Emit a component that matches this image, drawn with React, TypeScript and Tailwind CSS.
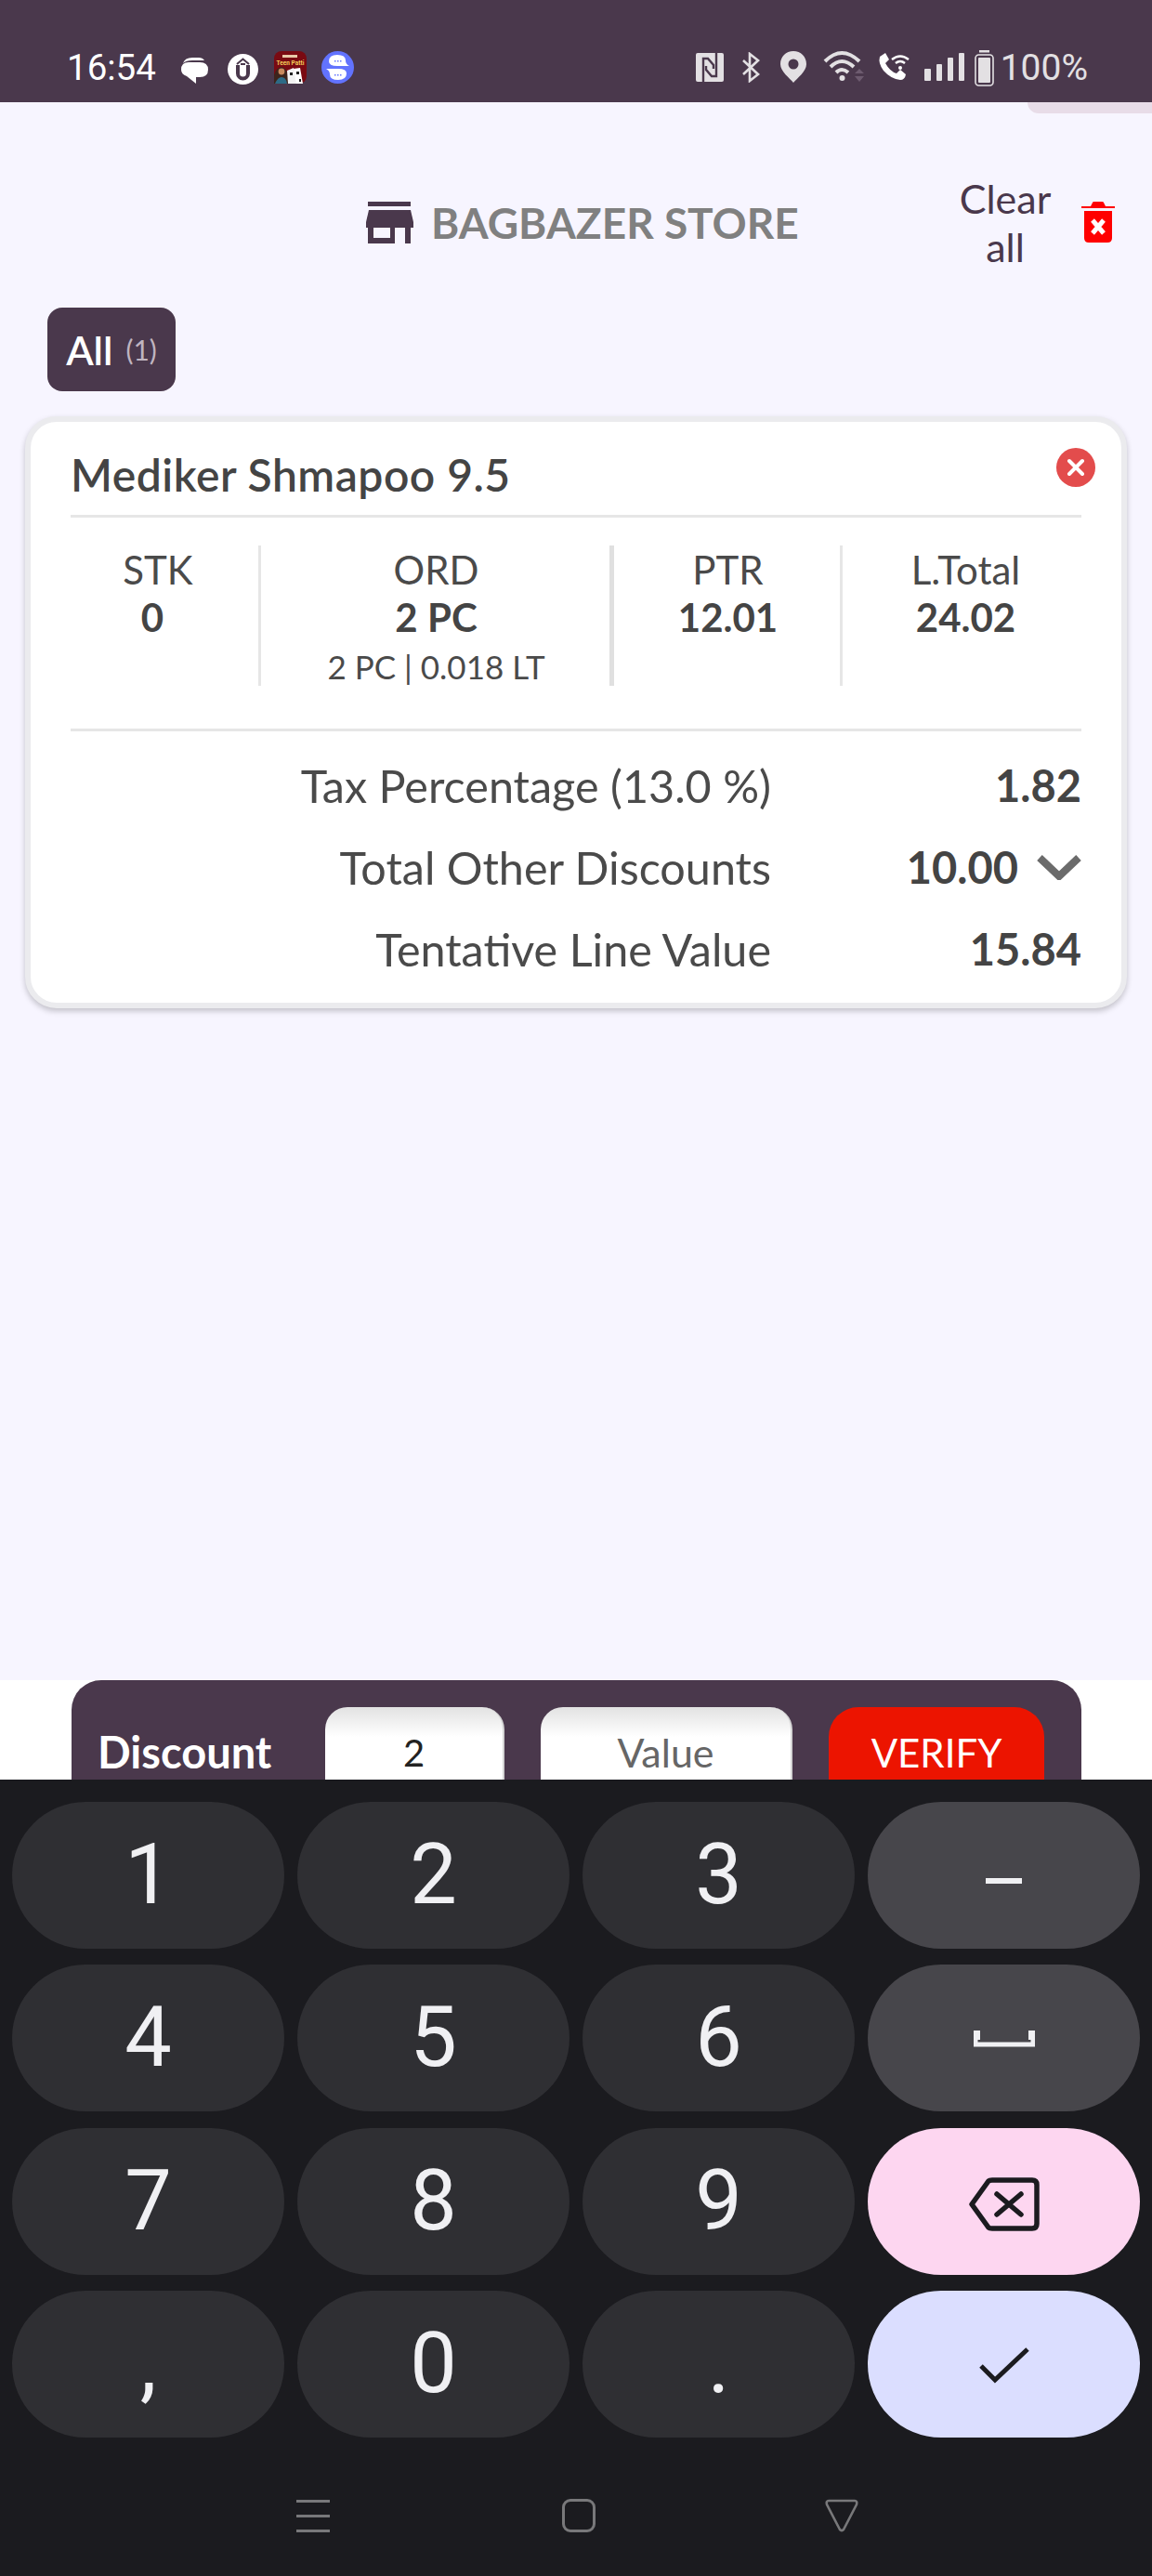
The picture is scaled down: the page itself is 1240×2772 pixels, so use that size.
import { ReactNode } from 'react'

const DIGIT_ROWS = [
  ['1', '2', '3'],
  ['4', '5', '6'],
  ['7', '8', '9'],
  [',', '0', '.'],
]

function MessageIcon() {
  return (
    <svg width="29" height="28" viewBox="0 0 29 28" className="mt-[7px] ml-[27px]">
      <path d="M2 6 Q4 0 12 0 H19 Q23 0 25 3 H12 Q5 3 2 6 Z" fill="#fff" />
      <path d="M0 13 Q0 5 8 5 H20 Q29 5 29 13 Q29 21 20 21 H16 V28 L6 20 Q0 18 0 13 Z" fill="#fff" />
    </svg>
  )
}

function UploadBadge() {
  return (
    <svg width="33" height="33" viewBox="0 0 33 33" className="mt-[3px] ml-[21px]">
      <circle cx="16.5" cy="16.5" r="16.5" fill="#fff" />
      <path d="M10 11 L16.5 5.5 L23 11" fill="none" stroke="#4a384c" strokeWidth="2" />
      <path d="M11 12 V21 A5.5 5.5 0 0 0 22 21 V12" fill="none" stroke="#4a384c" strokeWidth="4" />
      <path d="M14 10 H19 V12 H14 Z" fill="#4a384c" />
    </svg>
  )
}

function TeenPattiIcon() {
  return (
    <svg width="35" height="35" viewBox="0 0 35 35" className="ml-[17px]">
      <rect width="35" height="35" rx="8" fill="#7a0a12" />
      <text x="17.5" y="15" textAnchor="middle" fontSize="6.5" fontWeight="700" fill="#f4cd5a" fontFamily="Roboto, sans-serif">Teen Patti</text>
      <rect x="9" y="4" width="16" height="3" fill="#e8c9a8" />
      <path d="M0 35 V26 Q2 18 8 17 Q13 18 15 26 V35 Z" fill="#3d241c" />
      <circle cx="8" cy="22" r="3.4" fill="#c98a5d" />
      <path d="M1 35 Q4 28 8 28 Q13 28 14 35 Z" fill="#2d6b86" />
      <path d="M14 21 L21 18 L26 35 H15 Z" fill="#f2f2f2" />
      <path d="M21 19 L28 18 L31 35 H24 Z" fill="#ffffff" />
      <path d="M17 23 h3 v3 h-3 Z M24 22 h3 v3 h-3 Z M27 30 h2 v3 h-2 Z" fill="#222" />
    </svg>
  )
}

function ChatBubbleIcon() {
  return (
    <svg width="35" height="35" viewBox="0 0 35 35" className="ml-[16px]">
      <circle cx="17.5" cy="17.5" r="17.5" fill="#6273fe" />
      <path d="M8 11 Q8 4 17 4 Q26 4 26 10 Q26 14 30 16 H17 Q8 16 8 11 Z" fill="#fff" />
      <path d="M27 24 Q27 31 18 31 Q9 31 9 25 Q9 21 5 19 H18 Q27 19 27 24 Z" fill="#fff" />
      <path d="M14 10 h1.5 v1.5 h-1.5 Z M17 10 h1.5 v1.5 h-1.5 Z M20 10 h1.5 v1.5 h-1.5 Z M14 25 h1.5 v1.5 h-1.5 Z M17 25 h1.5 v1.5 h-1.5 Z M20 25 h1.5 v1.5 h-1.5 Z" fill="#6273fe" />
    </svg>
  )
}

function SystemIcons() {
  const c = '#e3e0e3'
  return (
    <div className="flex items-start">
      {/* nfc */}
      <svg width="30" height="31" viewBox="0 0 30 31" className="mt-[2px]">
        <rect width="30" height="31" rx="2" fill={c} />
        <path d="M8 31 V6 H13 L19 13 V17" fill="none" stroke="#4a384c" strokeWidth="2.4" />
        <path d="M22 0 V25 H17 L11 18 V14" fill="none" stroke="#4a384c" strokeWidth="2.4" />
      </svg>
      {/* bluetooth */}
      <svg width="21" height="33" viewBox="0 0 21 33" className="ml-[19px] mt-[1px]">
        <path d="M2 9 L18 24 L9 31 V2 L18 9 L2 24" fill="none" stroke={c} strokeWidth="2.6" />
      </svg>
      {/* location */}
      <svg width="28" height="34" viewBox="0 0 28 34" className="ml-[21px]">
        <path d="M14 0 C6 0 0 6 0 14 C0 22 10 29 14 34 C18 29 28 22 28 14 C28 6 22 0 14 0 Z" fill={c} />
        <circle cx="14" cy="14" r="5.5" fill="#4a384c" />
      </svg>
      {/* wifi with up/down arrows */}
      <svg width="45" height="35" viewBox="0 0 45 35" className="ml-[18px] -mt-[2px]">
        <path d="M2 13 Q20 -5 39 13" fill="none" stroke={c} strokeWidth="4" />
        <path d="M8 19 Q20 7 33 19" fill="none" stroke={c} strokeWidth="4" />
        <path d="M14 25 Q20 19 27 25" fill="none" stroke={c} strokeWidth="4" />
        <circle cx="20.5" cy="31" r="3" fill={c} />
        <path d="M34 26 L39 21 L44 26 Z M34 29 L44 29 L39 35 Z" fill="#6d5b6f" />
      </svg>
      {/* wifi calling */}
      <svg width="35" height="31" viewBox="0 0 35 31" className="ml-[14px] mt-[1px]">
        <path d="M2 5 L8 1 L12 8 L8 12 Q13 21 20 23 L24 19 L30 24 Q29 30 24 30 Q14 29 6 20 Q0 12 2 5 Z" fill="#fff" />
        <path d="M15 8 Q24 1 33 8" fill="none" stroke="#fff" strokeWidth="2.5" />
        <path d="M19 12 Q24 8 29 12" fill="none" stroke="#fff" strokeWidth="2.5" />
        <circle cx="24" cy="17" r="2" fill="#fff" />
      </svg>
      {/* signal */}
      <div className="ml-[15px] mt-[2px] flex h-[30px] items-end gap-[6px]">
        <div className="h-[13px] w-[7px] rounded-[1px] bg-[#e3e0e3]" />
        <div className="h-[18px] w-[6px] rounded-[1px] bg-[#e3e0e3]" />
        <div className="h-[25px] w-[6px] rounded-[1px] bg-[#e3e0e3]" />
        <div className="h-[30px] w-[6px] rounded-[1px] bg-[#e3e0e3]" />
      </div>
      {/* battery */}
      <svg width="21" height="39" viewBox="0 0 21 39" className="ml-[11px] -mt-[1px]">
        <rect x="5" y="0" width="11" height="2.5" fill={c} />
        <rect x="1" y="5" width="19" height="33" rx="3.5" fill="none" stroke={c} strokeWidth="1.6" />
        <rect x="4" y="8" width="13" height="27" rx="1" fill={c} />
      </svg>
    </div>
  )
}

function StatusBar() {
  return (
    <div className="flex h-[110px] shrink-0 items-start justify-between bg-[#4a384c] pl-[72px] pr-[69px] pt-[55px] font-['Roboto',sans-serif]">
      <div className="flex items-start">
        <span className="mt-[-1px] w-[96px] text-[38.5px] leading-[38px] text-white">16:54</span>
        <MessageIcon />
        <UploadBadge />
        <TeenPattiIcon />
        <ChatBubbleIcon />
      </div>
      <div className="flex items-start">
        <SystemIcons />
        <span className="ml-[7px] mt-[-1px] text-[39px] leading-[38px] text-[#e3e0e3]">100%</span>
      </div>
    </div>
  )
}

function StoreIcon() {
  return (
    <svg width="51" height="45" viewBox="0 0 51 45" className="shrink-0">
      <rect x="2" y="0" width="46" height="5" fill="#4a384c" />
      <path d="M3 9 H48 L51 22 V28 H0 V22 Z" fill="#4a384c" />
      <path d="M2 28 H48 V45 H2 Z M8 28 V39 H26 V28 Z M31 28 V45 H42 V28 Z" fill="#4a384c" fillRule="evenodd" />
    </svg>
  )
}

function TrashIcon() {
  return (
    <svg width="36" height="44" viewBox="0 0 36 44" className="shrink-0">
      <path d="M0 7 V5 H10 L12 1 Q12 0 14 0 H22 Q24 0 24 1 L26 5 H36 V7 Z" fill="#ff0000" />
      <path d="M3 10 H33 V39 Q33 44 28 44 H8 Q3 44 3 39 Z" fill="#ff0000" />
      <path d="M12 20 L24 34 M24 20 L12 34" stroke="#fff" strokeWidth="5" />
    </svg>
  )
}

function StatColumn({ label, value, sub, className, valueClass }: { label: string; value: string; sub?: string; className: string; valueClass?: string }) {
  return (
    <div className={`flex flex-col items-center ${className}`}>
      <span className="mt-[6px] text-[42px] leading-[40px] text-[#4a4a4a]">{label}</span>
      <span className={`mt-[11px] text-[42px] font-bold leading-[40px] text-[#444] ${valueClass ?? ''}`}>{value}</span>
      {sub && <span className="mt-[13px] text-[35px] leading-[40px] text-[#4a4a4a]">{sub}</span>}
    </div>
  )
}

function SummaryRow({ label, children, height }: { label: string; children: ReactNode; height: string }) {
  return (
    <div className={`flex items-center ${height}`}>
      <span className="w-[754px] text-right text-[48.5px] leading-none text-[#4a4a4a]">{label}</span>
      <div className="flex flex-1 items-center justify-end text-[47px] font-bold leading-none text-[#444]">{children}</div>
    </div>
  )
}

function ProductCard() {
  return (
    <div className="mx-[27px] mt-[27px] h-[637px] rounded-[34px] border-[6px] border-[#ebebee] bg-white shadow-[0_3px_6px_rgba(0,0,0,0.22)]">
      <div className="relative mx-[43px] flex h-[103px] items-start border-b-[3px] border-[#e6e6e6] pt-[29px]">
        <span className="text-[48px] font-semibold leading-[56px] tracking-[0.5px] text-[#444]">Mediker Shmapoo 9.5</span>
        <svg width="42" height="42" viewBox="0 0 42 42" className="absolute right-[-15px] top-[28px]">
          <circle cx="21" cy="21" r="21" fill="#e34c4c" />
          <path d="M14 14 L28 28 M28 14 L14 28" stroke="#fff" strokeWidth="4" strokeLinecap="round" />
        </svg>
      </div>
      <div className="mx-[43px] mt-[30px] flex h-[151px]">
        <StatColumn label="STK" value="0" valueClass="mr-[12px]" className="w-[205px] border-r-[3px] border-[#e6e6e6] pr-[14px]" />
        <StatColumn label="ORD" value="2 PC" sub="2 PC | 0.018 LT" className="w-[380px] border-r-[5px] border-[#e0e0e0] pl-[2px]" />
        <StatColumn label="PTR" value="12.01" className="w-[246px] border-r-[3px] border-[#e6e6e6] pl-[2px]" />
        <StatColumn label="L.Total" value="24.02" className="flex-1 pl-[8px]" />
      </div>
      <div className="mx-[43px] mt-[46px] border-t-[3px] border-[#e6e6e6] pt-[14px]">
        <SummaryRow label="Tax Percentage (13.0 %)" height="h-[88px]">1.82</SummaryRow>
        <SummaryRow label="Total Other Discounts" height="h-[88px]">
          10.00
          <svg width="48" height="28" viewBox="0 0 48 28" className="ml-[20px]">
            <path d="M3 4 L24 24 L45 4" fill="none" stroke="#6b6b6b" strokeWidth="8" />
          </svg>
        </SummaryRow>
        <SummaryRow label="Tentative Line Value" height="h-[88px]">15.84</SummaryRow>
      </div>
    </div>
  )
}

function DiscountBar() {
  return (
    <div className="h-[107px] shrink-0 overflow-hidden bg-white pl-[77px] pr-[76px]">
      <div className="flex h-full items-start rounded-t-[32px] bg-[#4a384c] pl-[28px] pt-[29px]">
        <span className="mt-[23px] w-[245px] text-[47px] font-bold leading-[50px] text-white">Discount</span>
        <div className="flex h-[110px] w-[193px] justify-center rounded-[24px] border-r-[2px] border-[#d4d4d4] bg-[linear-gradient(#e2e2e2,#ffffff_32px)] pt-[24px] text-[40px] leading-[50px] text-[#222]">2</div>
        <div className="ml-[39px] flex h-[110px] w-[271px] justify-center rounded-[24px] border-r-[2px] border-[#d4d4d4] bg-[linear-gradient(#e2e2e2,#ffffff_32px)] pt-[24px] text-[43px] leading-[50px] text-[#666]">Value</div>
        <div className="ml-[39px] flex h-[110px] w-[232px] justify-center rounded-[32px] bg-[#ec1400] pt-[24px] text-[42px] leading-[50px] text-white">VERIFY</div>
      </div>
    </div>
  )
}

function Key({ children, className }: { children: ReactNode; className: string }) {
  return <div className={`flex h-[158px] w-[293px] items-center justify-center rounded-full ${className}`}>{children}</div>
}

function SideKey({ row }: { row: number }) {
  if (row === 0) {
    return (
      <Key className="bg-[#47464b]">
        <div className="mt-[12px] h-[6px] w-[39px] bg-[#f0f0f3]" />
      </Key>
    )
  }
  if (row === 1) {
    return (
      <Key className="bg-[#47464b]">
        <svg width="66" height="18" viewBox="0 0 66 18" className="mt-[2px]">
          <path d="M2 0 V15 H64 V0" fill="none" stroke="#f0f0f3" strokeWidth="5" />
          <path d="M0 0 H7 V10 H0 Z M59 0 H66 V10 H59 Z" fill="#f0f0f3" />
        </svg>
      </Key>
    )
  }
  if (row === 2) {
    return (
      <Key className="bg-[#fdd6f0]">
        <svg width="76" height="58" viewBox="0 0 76 58" className="mt-[6px]">
          <path d="M3 29 L21 4 Q22 3 25 3 H68 Q73 3 73 8 V50 Q73 55 68 55 H25 Q22 55 21 54 Z" fill="none" stroke="#1b1b1f" strokeWidth="5.5" strokeLinejoin="round" />
          <path d="M30 18 L56 40 M56 18 L30 40" stroke="#1b1b1f" strokeWidth="5.5" strokeLinecap="round" />
        </svg>
      </Key>
    )
  }
  return (
    <Key className="bg-[#dbdeff]">
      <svg width="54" height="40" viewBox="0 0 54 40" className="mt-[2px]">
        <path d="M2 21 L17 36 L52 3" fill="none" stroke="#1b1b1f" strokeWidth="5" />
      </svg>
    </Key>
  )
}

function NavBar() {
  return (
    <div className="relative h-[149px]">
      <div className="absolute left-[319px] top-[67px] flex h-[35px] w-[36px] flex-col justify-between">
        <div className="h-[3px] bg-[#78787a]" />
        <div className="h-[3px] bg-[#78787a]" />
        <div className="h-[3px] bg-[#78787a]" />
      </div>
      <div className="absolute left-[605px] top-[66px] h-[36px] w-[36px] rounded-[9px] border-[3px] border-[#78787a]" />
      <svg width="36" height="36" viewBox="0 0 36 36" className="absolute left-[888px] top-[66px]">
        <path d="M4 2 H32 Q35 2 34 6 L20 33 Q18 35 16 33 L2 6 Q1 2 4 2 Z" fill="none" stroke="#78787a" strokeWidth="2.6" />
      </svg>
    </div>
  )
}

function Keyboard() {
  return (
    <div className="h-[857px] shrink-0 bg-[#1b1b1f] font-['Roboto',sans-serif]">
      <div className="flex flex-col gap-[17.33px] pl-[13px] pt-[24px]">
        {DIGIT_ROWS.map((row, i) => (
          <div key={i} className="flex gap-[14px]">
            {row.map(d => (
              <Key key={d} className="bg-[#2f2f33]">
                <span className="text-[90px] font-normal leading-none text-[#f0f0f3]">{d}</span>
              </Key>
            ))}
            <SideKey row={i} />
          </div>
        ))}
      </div>
      <NavBar />
    </div>
  )
}

export default function App() {
  return (
    <div className="relative flex h-[2772px] w-[1240px] flex-col overflow-hidden bg-[#f7f5ff] font-['Lato',sans-serif]">
      <StatusBar />
      <div className="absolute right-0 top-[110px] h-[12px] w-[134px] rounded-bl-[30px] bg-[#e8dce8]" />
      <div className="h-[1698px] shrink-0">
        <div className="flex items-start justify-between pl-[394px] pr-[40px] pt-[78px]">
          <div className="mt-[29px] flex items-center">
            <StoreIcon />
            <span className="ml-[19px] text-[46px] font-bold leading-[45px] text-[#808080]">BAGBAZER STORE</span>
          </div>
          <div className="flex items-start">
            <span className="w-[110px] text-center text-[43px] leading-[52px] text-[#4a384c]">Clear all</span>
            <div className="ml-[27px] mt-[29px]">
              <TrashIcon />
            </div>
          </div>
        </div>
        <div className="ml-[51px] mt-[39px] flex h-[90px] w-[138px] items-center justify-center rounded-[16px] bg-[#4a384c]">
          <span className="text-[43px] font-semibold leading-none text-white">All</span>
          <span className="ml-[14px] text-[30px] leading-none text-[#c0b5c0]">(1)</span>
        </div>
        <ProductCard />
      </div>
      <DiscountBar />
      <Keyboard />
    </div>
  )
}
